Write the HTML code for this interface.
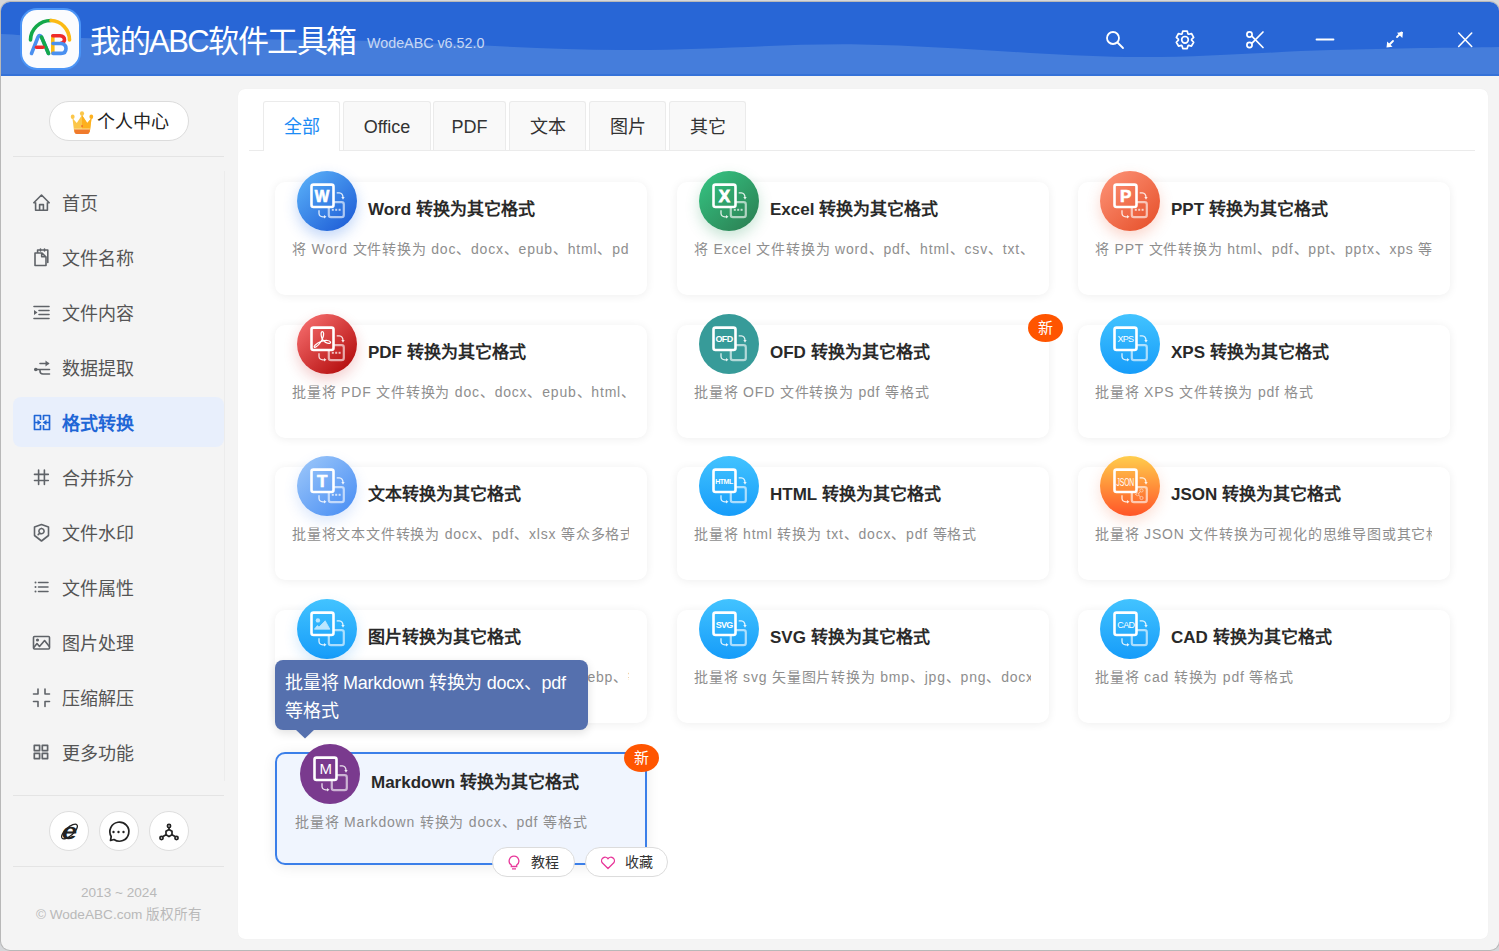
<!DOCTYPE html>
<html lang="zh-CN">
<head>
<meta charset="utf-8">
<style>
*{margin:0;padding:0;box-sizing:border-box}
html,body{width:1499px;height:951px;overflow:hidden;background:#d5d7da;font-family:"Liberation Sans",sans-serif}
.abs{position:absolute}
#win{position:absolute;left:1px;top:2px;width:1498px;height:948px;border-radius:9px;overflow:hidden;background:#f4f4f4;box-shadow:0 0 0 1px #b8b8b8}
#hdr{position:absolute;left:0;top:0;width:1498px;height:74px;background:#2866d6}
#hdr svg.wave{position:absolute;left:0;top:0}
.title{position:absolute;left:90px;top:22px;color:#fff;font-size:31px;line-height:40px;letter-spacing:-1.5px;white-space:nowrap}
.ver{position:absolute;left:367px;top:33px;color:#c8d8f4;font-size:14.3px;line-height:20px;white-space:nowrap}
.side-item{position:absolute;left:62px;margin-top:1.5px;font-size:18px;color:#555;line-height:24px;white-space:nowrap}
.side-ico{position:absolute;left:32px;width:18px;height:18px}
#panel{position:absolute;left:238px;top:89px;width:1250px;height:850px;background:#fff;border-radius:7px;box-shadow:0 0 1px rgba(0,0,0,.06)}
.tab{position:absolute;top:101px;height:50px;background:#f9f9f9;border:1px solid #ebebeb;border-bottom:none;border-radius:3px 3px 0 0;font-size:18px;color:#333;text-align:center;line-height:50px;white-space:nowrap}
.tab.act{background:#fff;color:#1c8cf5;height:50px}
.card{position:absolute;width:372px;height:113px;background:#fff;border-radius:10px;box-shadow:0 1px 10px rgba(0,0,0,.07)}
.card.hov{background:#f0f5fe;border:2px solid #3b7fe9;box-shadow:0 2px 14px rgba(0,0,0,.08)}
.cico{position:absolute;width:60px;height:60px;border-radius:50%}
.ctitle{position:absolute;font-size:17px;line-height:24px;margin-top:2px;font-weight:bold;color:#292929;white-space:nowrap}
.cdesc{position:absolute;width:337px;overflow:hidden;font-size:14px;line-height:22px;margin-top:0px;letter-spacing:0.8px;color:#8e8e8e;white-space:nowrap}
.badge{position:absolute;width:35px;height:28px;border-radius:50%;background:#ff5500;color:#fff;font-size:15px;line-height:28px;text-align:center}
.pbtn{position:absolute;width:83px;height:30px;border-radius:15px;background:#fff;border:1px solid #dcdcdc;font-size:14px;line-height:28px;color:#333;white-space:nowrap}
</style>
</head>
<body>
<div id="win">
  <div id="hdr">
    <svg class="wave" width="1498" height="74" viewBox="0 0 1498 74">
      <path d="M0 32 C33.3 33.6 41.7 35.4 100 36.5 C158.3 37.6 263.3 36.6 350 38.5 C436.7 40.4 535.0 47.3 620 48 C705.0 48.7 775.8 41.3 860 42.5 C944.2 43.7 1046.7 54.1 1125 55 C1203.3 55.9 1267.7 49.7 1330 48 C1392.3 46.3 1454.0 45.7 1499 45 L1500 74 L0 74 Z" fill="#457ddb"/>
      <rect x="0" y="72" width="1498" height="2" fill="#3572d8"/>
    </svg>
  </div>
</div>

<div class="abs" style="left:49px;top:101px;width:140px;height:40px;border-radius:20px;background:#fff;border:1px solid #dcdcdc"></div>
<svg class="abs" style="left:67.5px;top:110px" width="28" height="26" viewBox="0 0 28 26"><g transform="translate(14 0) scale(0.87 1) translate(-14 0)">
  <path d="M3 8 L8 13 L14 5 L20 13 L25 8 L23 22 L5 22 Z" fill="#fbc64a"/>
  <path d="M14 5 L20 13 L25 8 L23 22 L14 22 Z" fill="#fdb01e"/>
  <circle cx="3.3" cy="6.8" r="2.2" fill="#fbc64a"/><circle cx="14" cy="3.6" r="2.4" fill="#fbc64a"/><circle cx="24.7" cy="6.8" r="2.2" fill="#fdb01e"/>
  <path d="M5 19 H23 L22.5 22.5 Q22 24 20 24 H8 Q6 24 5.5 22.5 Z" fill="#f07a2c"/>
  <path d="M5 19 H23" stroke="#fde3a0" stroke-width="1"/>
  <path d="M13 15.5 L15 15.5 L14 17.5 Z" fill="#e53a2a"/>
</g></svg>
<div class="abs" style="left:97px;top:110px;font-size:18px;line-height:24px;color:#222;white-space:nowrap">个人中心</div>
<div class="abs" style="left:13px;top:156px;width:211px;height:1px;background:#e4e4e4"></div>
<div class="abs" style="left:224px;top:171px;width:1px;height:610px;background:#ececec"></div>
<div class="abs" style="left:13px;top:397px;width:211px;height:50px;border-radius:8px;background:#e8effc"></div>
<svg class="abs" style="left:0;top:180px" width="60" height="600" viewBox="0 180 60 600">
 <g fill="none" stroke="#5f6368" stroke-width="1.6" stroke-linejoin="round" stroke-linecap="round">
  <path d="M33.8 202.8 L41.5 195 L49.2 202.8 H47.4 V210.3 H35.6 V202.8 Z M39.6 210.3 V204.6 H43.4 V210.3"/>
  <path d="M35 253 H42 L46 257 V265.5 H35 Z M41.7 253 V256.8 H46 M37.6 253 V250 H47.8 V262.5 M40.5 249 V251 M44.5 249 V251"/>
  <path d="M34 306.5 H49 M39 310.5 H49 M39 314.5 H49 M34 318.5 H49"/>
  <path d="M35 369.5 H49.5 M40 369.5 V371 Q40 374 43 374 H49.5 M40 363.5 H48.5"/>
  <path d="M34.5 474.4 H48.3 M34.5 480.5 H48.3 M38.6 470 V484.5 M44.4 470 V484.5"/>
  <path d="M41.5 524.5 L48.5 527 V535.5 L41.5 541 L34.5 535.5 V527 Z M41.5 528.5 a2.6 2.6 0 1 1 -0.01 0 M39.8 533 L38.2 534.6"/>
  <path d="M38.5 582.5 H48 M38.5 587 H48 M38.5 591.5 H48" stroke-width="1.5"/>
  <rect x="33.5" y="636.5" width="16" height="12.5" rx="1"/>
  <path d="M33.8 647.5 L37 643.5 L39.5 646.5 L44.6 640.5 L49.3 646.5"/>
  <path d="M38 689 V694 H33.5 M45 689 V694 H49.5 M33.5 701.5 H38 V706.5 M49.5 701.5 H45 V706.5"/>
  <rect x="34.3" y="745.3" width="5.3" height="5.3" stroke-width="1.7"/><rect x="42.3" y="745.3" width="5.3" height="5.3" stroke-width="1.7"/>
  <rect x="34.3" y="753.3" width="5.3" height="5.3" stroke-width="1.7"/><rect x="42.3" y="753.3" width="5.3" height="5.3" stroke-width="1.7"/>
 </g>
 <g fill="#5f6368">
  <circle cx="35.8" cy="369.5" r="1.8"/><path d="M45.5 360.5 L49.3 363.5 L45.5 366.5 Z"/>
  <path d="M34 310 L37.5 312.5 L34 315 Z"/>
  <circle cx="35.5" cy="582.5" r="1"/><circle cx="35.5" cy="587" r="1"/><circle cx="35.5" cy="591.5" r="1"/>
  <circle cx="37.5" cy="640" r="1.6"/>
 </g>
 <g fill="none" stroke="#1f66d6" stroke-width="1.7" stroke-linejoin="round">
  <path d="M40.5 420 V415.5 H34.5 V429.5 H40.5 V425 M43.5 420 V415.5 H49.5 V429.5 H43.5 V425 M34.5 422.5 H38.5 M49.5 422.5 H45.5"/>
 </g>
 <g fill="#1f66d6"><path d="M37.5 419.7 L41.3 422.5 L37.5 425.3 Z M46.5 419.7 L42.7 422.5 L46.5 425.3 Z"/></g>
</svg>
<div class="side-item" style="top:190px">首页</div>
<div class="side-item" style="top:245px">文件名称</div>
<div class="side-item" style="top:300px">文件内容</div>
<div class="side-item" style="top:355px">数据提取</div>
<div class="side-item" style="top:410px;color:#1f66d6;font-weight:bold">格式转换</div>
<div class="side-item" style="top:465px">合并拆分</div>
<div class="side-item" style="top:520px">文件水印</div>
<div class="side-item" style="top:575px">文件属性</div>
<div class="side-item" style="top:630px">图片处理</div>
<div class="side-item" style="top:685px">压缩解压</div>
<div class="side-item" style="top:740px">更多功能</div>
<div class="abs" style="left:13px;top:795px;width:211px;height:1px;background:#e4e4e4"></div>
<div class="abs" style="left:49px;top:811px;width:40px;height:40px;border-radius:50%;background:#fff;border:1px solid #dedede"></div>
<div class="abs" style="left:99px;top:811px;width:40px;height:40px;border-radius:50%;background:#fff;border:1px solid #dedede"></div>
<div class="abs" style="left:149px;top:811px;width:40px;height:40px;border-radius:50%;background:#fff;border:1px solid #dedede"></div>
<svg class="abs" style="left:45px;top:805px" width="150" height="55" viewBox="45 805 150 55">
  <g transform="translate(69.5 832) skewX(-12) scale(1.2 1)"><text x="0" y="6.6" text-anchor="middle" font-family="Liberation Sans" font-weight="bold" font-size="23" fill="#222">e</text></g>
  <ellipse cx="69.5" cy="831.5" rx="10" ry="4" transform="rotate(-42 69.5 831.5)" fill="none" stroke="#222" stroke-width="1.2"/>
  <g fill="none" stroke="#222" stroke-width="1.7">
   <path d="M110.5 840.5 L111.2 836.5 A9.5 9.5 0 1 1 114 839.5 Z" stroke-linejoin="round"/>
   <circle cx="169" cy="826" r="1.6"/><circle cx="161.5" cy="838" r="1.6"/><circle cx="176.5" cy="838" r="1.6"/>
   <path d="M169 827.6 V829.5 M166 831.3 L169 829.5 L172 831.3 V834.7 L169 836.5 L166 834.7 Z M166 834.7 L163 836.5 M172 834.7 L175 836.5"/>
  </g>
  <g fill="#222"><circle cx="113.5" cy="832" r="1.2"/><circle cx="118.5" cy="832" r="1.2"/><circle cx="123.5" cy="832" r="1.2"/></g>
</svg>
<div class="abs" style="left:13px;top:866px;width:211px;height:1px;background:#e4e4e4"></div>
<div class="abs" style="left:0;top:884px;width:238px;text-align:center;font-size:13.6px;line-height:18px;color:#b9b9b9">2013 ~ 2024</div>
<div class="abs" style="left:0;top:906px;width:238px;text-align:center;font-size:13.6px;line-height:18px;color:#b9b9b9">© WodeABC.com 版权所有</div>
<div id="panel"></div>
<div class="tab act" style="left:263px;width:77px">全部</div>
<div class="tab" style="left:343px;width:88px">Office</div>
<div class="tab" style="left:433px;width:73px">PDF</div>
<div class="tab" style="left:509px;width:77px">文本</div>
<div class="tab" style="left:589px;width:77px">图片</div>
<div class="tab" style="left:669px;width:77px">其它</div>
<div class="abs" style="left:249px;top:150px;width:1226px;height:1px;background:#ebebeb"></div><div class="abs" style="left:264px;top:150px;width:75px;height:1px;background:#fff"></div>

<div class="abs" style="left:20px;top:8px;width:61px;height:62px;border-radius:17px;background:#4b94f6"></div>
<div class="abs" style="left:22px;top:10px;width:57px;height:58px;border-radius:15px;background:#fbfcfe"></div>
<svg class="abs" style="left:0;top:0" width="100" height="80" viewBox="0 0 100 80">
 <g fill="none" stroke-linecap="round" stroke-width="3.6">
  <path d="M30.5 40 A20.5 19.5 0 0 1 51 20.5" stroke="#13a84a"/>
  <path d="M51 20.5 A19 19.5 0 0 1 69.5 40" stroke="#fbba14"/>
  <path d="M31.5 53.5 L38 37 Q39.5 34 41.5 37 L48.5 53.5" stroke="#4a90f0"/>
  <path d="M41.5 37 L48.5 53.5" stroke="#13a84a"/>
  <path d="M36.5 47.3 L43 47.3" stroke="#ee2a2a"/>
  <path d="M52.8 36.5 L52.8 53" stroke="#fbba14"/>
  <path d="M52.8 35.8 L60 35.8 Q64.5 36 64.5 40 Q64 42.8 61 43.2" stroke="#ee2a2a"/>
  <path d="M53 43.5 L61 43.5 Q66 44 66 48.5 Q66 53.4 61 53.4 L53 53.4" stroke="#4a90f0"/>
 </g>
</svg>

<svg class="abs" style="left:1090px;top:20px" width="400" height="40" viewBox="1090 20 400 40">
 <g fill="none" stroke="#fff" stroke-width="1.8" stroke-linecap="round">
  <circle cx="1113" cy="38" r="6"/><path d="M1117.5 42.5 L1123 48"/>
  <path d="M1316.5 39.5 H1333.5"/>
  <path d="M1458.7 33 L1471.7 46.5 M1471.7 33 L1458.7 46.5" stroke-width="1.6"/>
  <path d="M1388.5 45.5 L1393 41 M1397 37 L1401.5 32.5"/>
 </g>
 <g fill="#fff">
  <path d="M1386.5 47.5 L1387.2 41.5 L1392.5 46.8 Z"/>
  <path d="M1403 32 L1402.3 38 L1397 32.7 Z"/>
 </g>
 <g fill="none" stroke="#fff" stroke-width="1.7">
  <path d="M1182.00 33.92 L1182.82 31.07 L1187.18 31.07 L1188.00 33.92 L1188.59 34.26 L1191.47 33.55 L1193.65 37.32 L1191.59 39.45 L1191.59 40.15 L1193.65 42.28 L1191.47 46.05 L1188.59 45.34 L1188.00 45.68 L1187.18 48.53 L1182.82 48.53 L1182.00 45.68 L1181.41 45.34 L1178.53 46.05 L1176.35 42.28 L1178.41 40.15 L1178.41 39.45 L1176.35 37.32 L1178.53 33.55 L1181.41 34.26 Z" stroke-linejoin="round"/>
  <circle cx="1185" cy="39.8" r="3.3"/>
  <circle cx="1249.5" cy="34.5" r="2.6"/><circle cx="1249.5" cy="45" r="2.6"/>
  <path d="M1251.8 36.2 L1263 47.5 M1251.8 43.3 L1263 32" stroke-linecap="round"/>
 </g>
</svg>
<!--CARDS-->
<div class="card" style="left:275px;top:182px"></div>
<div class="cico" style="left:297px;top:171px;box-shadow:0 6px 14px rgba(40,110,230,.28)"></div>
<svg class="abs" style="left:297px;top:171px" width="60" height="60" viewBox="0 0 60 60"><defs><linearGradient id="g_word" gradientUnits="userSpaceOnUse" x1="8" y1="6" x2="52" y2="54"><stop offset="0" stop-color="#55aaf6"/><stop offset="1" stop-color="#2161d8"/></linearGradient></defs><circle cx="30" cy="30" r="30" fill="url(#g_word)"/><g fill="none" stroke="#fff"><rect x="31.8" y="31.2" width="15" height="15" rx="2.2" stroke-width="2.2" opacity=".62"/><path d="M39.7 21.9 H42.3 Q45.8 22.2 46 26.5" stroke-width="1.3" opacity=".85"/><path d="M22 39.2 V42.5 Q22.3 45.7 25.8 45.8 H27.3" stroke-width="1.3" opacity=".85"/></g><g fill="#fff" opacity=".85"><path d="M44.3 26 L47.7 26 L46 28.8 Z"/><path d="M27 44.1 L29.5 45.8 L27 47.5 Z"/></g><g fill="#fff" opacity=".7"><rect x="34.8" y="37.8" width="2" height="2"/><rect x="38.2" y="37.8" width="2" height="2"/><rect x="41.6" y="37.8" width="2" height="2"/></g><rect x="14.5" y="13.6" width="22" height="22.4" rx="2" fill="url(#g_word)" stroke="#fff" stroke-width="2.6"/><text x="25" y="31.2" text-anchor="middle" font-family="Liberation Sans" fill="#fff" font-weight="bold" font-size="16.5" stroke="#fff" stroke-width=".7" transform="translate(25 0) scale(0.93 1) translate(-25 0)">W</text></svg>
<div class="ctitle" style="left:368px;top:196px">Word 转换为其它格式</div>
<div class="cdesc" style="left:292px;top:238px">将 Word 文件转换为 doc、docx、epub、html、pdf、jpg 等格式</div>
<div class="card" style="left:677px;top:182px"></div>
<div class="cico" style="left:699px;top:171px;box-shadow:0 6px 14px rgba(40,150,90,.25)"></div>
<svg class="abs" style="left:699px;top:171px" width="60" height="60" viewBox="0 0 60 60"><defs><linearGradient id="g_excel" gradientUnits="userSpaceOnUse" x1="8" y1="6" x2="52" y2="54"><stop offset="0" stop-color="#34be7e"/><stop offset="1" stop-color="#2c8456"/></linearGradient></defs><circle cx="30" cy="30" r="30" fill="url(#g_excel)"/><g fill="none" stroke="#fff"><rect x="31.8" y="31.2" width="15" height="15" rx="2.2" stroke-width="2.2" opacity=".62"/><path d="M39.7 21.9 H42.3 Q45.8 22.2 46 26.5" stroke-width="1.3" opacity=".85"/><path d="M22 39.2 V42.5 Q22.3 45.7 25.8 45.8 H27.3" stroke-width="1.3" opacity=".85"/></g><g fill="#fff" opacity=".85"><path d="M44.3 26 L47.7 26 L46 28.8 Z"/><path d="M27 44.1 L29.5 45.8 L27 47.5 Z"/></g><g fill="#fff" opacity=".7"><rect x="34.8" y="37.8" width="2" height="2"/><rect x="38.2" y="37.8" width="2" height="2"/><rect x="41.6" y="37.8" width="2" height="2"/></g><rect x="14.5" y="13.6" width="22" height="22.4" rx="2" fill="url(#g_excel)" stroke="#fff" stroke-width="2.6"/><text x="25.3" y="31.2" text-anchor="middle" font-family="Liberation Sans" fill="#fff" font-weight="bold" font-size="17" stroke="#fff" stroke-width=".8">X</text></svg>
<div class="ctitle" style="left:770px;top:196px">Excel 转换为其它格式</div>
<div class="cdesc" style="left:694px;top:238px">将 Excel 文件转换为 word、pdf、html、csv、txt、jpg 等格式</div>
<div class="card" style="left:1078px;top:182px"></div>
<div class="cico" style="left:1100px;top:171px;box-shadow:0 6px 14px rgba(240,100,60,.25)"></div>
<svg class="abs" style="left:1100px;top:171px" width="60" height="60" viewBox="0 0 60 60"><defs><linearGradient id="g_ppt" gradientUnits="userSpaceOnUse" x1="8" y1="6" x2="52" y2="54"><stop offset="0" stop-color="#fb8d70"/><stop offset="1" stop-color="#e85530"/></linearGradient></defs><circle cx="30" cy="30" r="30" fill="url(#g_ppt)"/><g fill="none" stroke="#fff"><rect x="31.8" y="31.2" width="15" height="15" rx="2.2" stroke-width="2.2" opacity=".62"/><path d="M39.7 21.9 H42.3 Q45.8 22.2 46 26.5" stroke-width="1.3" opacity=".85"/><path d="M22 39.2 V42.5 Q22.3 45.7 25.8 45.8 H27.3" stroke-width="1.3" opacity=".85"/></g><g fill="#fff" opacity=".85"><path d="M44.3 26 L47.7 26 L46 28.8 Z"/><path d="M27 44.1 L29.5 45.8 L27 47.5 Z"/></g><g fill="#fff" opacity=".7"><rect x="34.8" y="37.8" width="2" height="2"/><rect x="38.2" y="37.8" width="2" height="2"/><rect x="41.6" y="37.8" width="2" height="2"/></g><rect x="14.5" y="13.6" width="22" height="22.4" rx="2" fill="url(#g_ppt)" stroke="#fff" stroke-width="2.6"/><text x="25.6" y="31.2" text-anchor="middle" font-family="Liberation Sans" fill="#fff" font-weight="bold" font-size="17" stroke="#fff" stroke-width=".6">P</text></svg>
<div class="ctitle" style="left:1171px;top:196px">PPT 转换为其它格式</div>
<div class="cdesc" style="left:1095px;top:238px">将 PPT 文件转换为 html、pdf、ppt、pptx、xps 等格式</div>
<div class="card" style="left:275px;top:325px"></div>
<div class="cico" style="left:297px;top:314px;box-shadow:0 6px 14px rgba(200,30,30,.22)"></div>
<svg class="abs" style="left:297px;top:314px" width="60" height="60" viewBox="0 0 60 60"><defs><linearGradient id="g_pdf" gradientUnits="userSpaceOnUse" x1="8" y1="6" x2="52" y2="54"><stop offset="0" stop-color="#f26868"/><stop offset="1" stop-color="#b50f0f"/></linearGradient></defs><circle cx="30" cy="30" r="30" fill="url(#g_pdf)"/><g fill="none" stroke="#fff"><rect x="31.8" y="31.2" width="15" height="15" rx="2.2" stroke-width="2.2" opacity=".62"/><path d="M39.7 21.9 H42.3 Q45.8 22.2 46 26.5" stroke-width="1.3" opacity=".85"/><path d="M22 39.2 V42.5 Q22.3 45.7 25.8 45.8 H27.3" stroke-width="1.3" opacity=".85"/></g><g fill="#fff" opacity=".85"><path d="M44.3 26 L47.7 26 L46 28.8 Z"/><path d="M27 44.1 L29.5 45.8 L27 47.5 Z"/></g><g fill="#fff" opacity=".7"><rect x="34.8" y="37.8" width="2" height="2"/><rect x="38.2" y="37.8" width="2" height="2"/><rect x="41.6" y="37.8" width="2" height="2"/></g><rect x="14.5" y="13.6" width="22" height="22.4" rx="2" fill="url(#g_pdf)" stroke="#fff" stroke-width="2.6"/><path d="M25.4 17.6 C23.6 17.6 23.9 21.8 25 24.6 C26.3 28 30.6 29.8 32.7 29.3 C34.3 28.9 33.6 26.6 30.2 26.5 C26.2 26.4 20.8 28.9 18 31.3 C16.4 32.8 17.4 34 19.2 32.8 C21.5 31.2 24.6 27 25.9 23.6 C26.9 20.9 27 17.6 25.4 17.6 Z" fill="none" stroke="#fff" stroke-width="1.25" stroke-linejoin="round"/></svg>
<div class="ctitle" style="left:368px;top:339px">PDF 转换为其它格式</div>
<div class="cdesc" style="left:292px;top:381px">批量将 PDF 文件转换为 doc、docx、epub、html、jpg 等格式</div>
<div class="card" style="left:677px;top:325px"></div>
<div class="cico" style="left:699px;top:314px;box-shadow:0 6px 14px rgba(0,0,0,0)"></div>
<svg class="abs" style="left:699px;top:314px" width="60" height="60" viewBox="0 0 60 60"><defs><linearGradient id="g_ofd" gradientUnits="userSpaceOnUse" x1="30" y1="0" x2="30" y2="60"><stop offset="0" stop-color="#379b99"/><stop offset="1" stop-color="#379b99"/></linearGradient></defs><circle cx="30" cy="30" r="30" fill="url(#g_ofd)"/><g fill="none" stroke="#fff"><rect x="31.8" y="31.2" width="15" height="15" rx="2.2" stroke-width="2.2" opacity=".62"/><path d="M39.7 21.9 H42.3 Q45.8 22.2 46 26.5" stroke-width="1.3" opacity=".85"/><path d="M22 39.2 V42.5 Q22.3 45.7 25.8 45.8 H27.3" stroke-width="1.3" opacity=".85"/></g><g fill="#fff" opacity=".85"><path d="M44.3 26 L47.7 26 L46 28.8 Z"/><path d="M27 44.1 L29.5 45.8 L27 47.5 Z"/></g><rect x="14.5" y="13.6" width="22" height="22.4" rx="2" fill="url(#g_ofd)" stroke="#fff" stroke-width="2.6"/><text x="25" y="28.3" text-anchor="middle" font-family="Liberation Sans" fill="#fff" font-weight="bold" font-size="9" letter-spacing="-0.7">OFD</text></svg>
<div class="ctitle" style="left:770px;top:339px">OFD 转换为其它格式</div>
<div class="cdesc" style="left:694px;top:381px">批量将 OFD 文件转换为 pdf 等格式</div>
<div class="card" style="left:1078px;top:325px"></div>
<div class="cico" style="left:1100px;top:314px;box-shadow:0 6px 14px rgba(0,0,0,0)"></div>
<svg class="abs" style="left:1100px;top:314px" width="60" height="60" viewBox="0 0 60 60"><defs><linearGradient id="g_xps" gradientUnits="userSpaceOnUse" x1="30" y1="0" x2="30" y2="60"><stop offset="0" stop-color="#42c3ff"/><stop offset="1" stop-color="#169cf9"/></linearGradient></defs><circle cx="30" cy="30" r="30" fill="url(#g_xps)"/><g fill="none" stroke="#fff"><rect x="31.8" y="31.2" width="15" height="15" rx="2.2" stroke-width="2.2" opacity=".62"/><path d="M39.7 21.9 H42.3 Q45.8 22.2 46 26.5" stroke-width="1.3" opacity=".85"/><path d="M22 39.2 V42.5 Q22.3 45.7 25.8 45.8 H27.3" stroke-width="1.3" opacity=".85"/></g><g fill="#fff" opacity=".85"><path d="M44.3 26 L47.7 26 L46 28.8 Z"/><path d="M27 44.1 L29.5 45.8 L27 47.5 Z"/></g><rect x="14.5" y="13.6" width="22" height="22.4" rx="2" fill="url(#g_xps)" stroke="#fff" stroke-width="2.6"/><text x="25.3" y="28.3" text-anchor="middle" font-family="Liberation Sans" fill="#fff" font-size="9" letter-spacing="-0.8">XPS</text></svg>
<div class="ctitle" style="left:1171px;top:339px">XPS 转换为其它格式</div>
<div class="cdesc" style="left:1095px;top:381px">批量将 XPS 文件转换为 pdf 格式</div>
<div class="card" style="left:275px;top:467px"></div>
<div class="cico" style="left:297px;top:456px;box-shadow:0 6px 14px rgba(80,140,240,.2)"></div>
<svg class="abs" style="left:297px;top:456px" width="60" height="60" viewBox="0 0 60 60"><defs><linearGradient id="g_txt" gradientUnits="userSpaceOnUse" x1="8" y1="6" x2="52" y2="54"><stop offset="0" stop-color="#95c2f9"/><stop offset="1" stop-color="#4f92f4"/></linearGradient></defs><circle cx="30" cy="30" r="30" fill="url(#g_txt)"/><g fill="none" stroke="#fff"><rect x="31.8" y="31.2" width="15" height="15" rx="2.2" stroke-width="2.2" opacity=".62"/><path d="M39.7 21.9 H42.3 Q45.8 22.2 46 26.5" stroke-width="1.3" opacity=".85"/><path d="M22 39.2 V42.5 Q22.3 45.7 25.8 45.8 H27.3" stroke-width="1.3" opacity=".85"/></g><g fill="#fff" opacity=".85"><path d="M44.3 26 L47.7 26 L46 28.8 Z"/><path d="M27 44.1 L29.5 45.8 L27 47.5 Z"/></g><g fill="#fff" opacity=".7"><rect x="34.8" y="37.8" width="2" height="2"/><rect x="38.2" y="37.8" width="2" height="2"/><rect x="41.6" y="37.8" width="2" height="2"/></g><rect x="14.5" y="13.6" width="22" height="22.4" rx="2" fill="url(#g_txt)" stroke="#fff" stroke-width="2.6"/><text x="25.2" y="31.2" text-anchor="middle" font-family="Liberation Sans" fill="#fff" font-weight="bold" font-size="17" stroke="#fff" stroke-width=".6">T</text></svg>
<div class="ctitle" style="left:368px;top:481px">文本转换为其它格式</div>
<div class="cdesc" style="left:292px;top:523px">批量将文本文件转换为 docx、pdf、xlsx 等众多格式</div>
<div class="card" style="left:677px;top:467px"></div>
<div class="cico" style="left:699px;top:456px;box-shadow:0 6px 14px rgba(0,0,0,0)"></div>
<svg class="abs" style="left:699px;top:456px" width="60" height="60" viewBox="0 0 60 60"><defs><linearGradient id="g_html" gradientUnits="userSpaceOnUse" x1="30" y1="0" x2="30" y2="60"><stop offset="0" stop-color="#42c3ff"/><stop offset="1" stop-color="#169cf9"/></linearGradient></defs><circle cx="30" cy="30" r="30" fill="url(#g_html)"/><g fill="none" stroke="#fff"><rect x="31.8" y="31.2" width="15" height="15" rx="2.2" stroke-width="2.2" opacity=".62"/><path d="M39.7 21.9 H42.3 Q45.8 22.2 46 26.5" stroke-width="1.3" opacity=".85"/><path d="M22 39.2 V42.5 Q22.3 45.7 25.8 45.8 H27.3" stroke-width="1.3" opacity=".85"/></g><g fill="#fff" opacity=".85"><path d="M44.3 26 L47.7 26 L46 28.8 Z"/><path d="M27 44.1 L29.5 45.8 L27 47.5 Z"/></g><rect x="14.5" y="13.6" width="22" height="22.4" rx="2" fill="url(#g_html)" stroke="#fff" stroke-width="2.6"/><text x="25" y="27.6" text-anchor="middle" font-family="Liberation Sans" fill="#fff" font-weight="bold" font-size="7" letter-spacing="-0.5">HTML</text></svg>
<div class="ctitle" style="left:770px;top:481px">HTML 转换为其它格式</div>
<div class="cdesc" style="left:694px;top:523px">批量将 html 转换为 txt、docx、pdf 等格式</div>
<div class="card" style="left:1078px;top:467px"></div>
<div class="cico" style="left:1100px;top:456px;box-shadow:0 6px 14px rgba(240,100,50,.2)"></div>
<svg class="abs" style="left:1100px;top:456px" width="60" height="60" viewBox="0 0 60 60"><defs><linearGradient id="g_json" gradientUnits="userSpaceOnUse" x1="30" y1="0" x2="30" y2="60"><stop offset="0" stop-color="#ffcd4c"/><stop offset="1" stop-color="#ff5528"/></linearGradient></defs><circle cx="30" cy="30" r="30" fill="url(#g_json)"/><g fill="none" stroke="#fff"><rect x="31.8" y="31.2" width="15" height="15" rx="2.2" stroke-width="2.2" opacity=".62"/><path d="M39.7 21.9 H42.3 Q45.8 22.2 46 26.5" stroke-width="1.3" opacity=".85"/><path d="M22 39.2 V42.5 Q22.3 45.7 25.8 45.8 H27.3" stroke-width="1.3" opacity=".85"/></g><g fill="#fff" opacity=".85"><path d="M44.3 26 L47.7 26 L46 28.8 Z"/><path d="M27 44.1 L29.5 45.8 L27 47.5 Z"/></g><g fill="none" stroke="#fff" stroke-width=".9" opacity=".6"><circle cx="41.5" cy="34.5" r="1.6"/><circle cx="41.5" cy="42" r="1.6"/><circle cx="37.5" cy="38.3" r="1.4"/><path d="M35 38.3 H36 M38.8 37.6 L40.2 35.5 M38.8 39 L40.2 41"/></g><rect x="14.5" y="13.6" width="22" height="22.4" rx="2" fill="url(#g_json)" stroke="#fff" stroke-width="2.6"/><text x="25.3" y="29.6" text-anchor="middle" font-family="Liberation Sans" fill="#fff" font-size="11" letter-spacing="-0.3" transform="translate(25.3 0) scale(0.62 1) translate(-25.3 0)">JSON</text></svg>
<div class="ctitle" style="left:1171px;top:481px">JSON 转换为其它格式</div>
<div class="cdesc" style="left:1095px;top:523px">批量将 JSON 文件转换为可视化的思维导图或其它格式</div>
<div class="card" style="left:275px;top:610px"></div>
<div class="cico" style="left:297px;top:599px;box-shadow:0 6px 14px rgba(40,150,240,.2)"></div>
<svg class="abs" style="left:297px;top:599px" width="60" height="60" viewBox="0 0 60 60"><defs><linearGradient id="g_img" gradientUnits="userSpaceOnUse" x1="30" y1="0" x2="30" y2="60"><stop offset="0" stop-color="#42c3ff"/><stop offset="1" stop-color="#169cf9"/></linearGradient></defs><circle cx="30" cy="30" r="30" fill="url(#g_img)"/><g fill="none" stroke="#fff"><rect x="31.8" y="31.2" width="15" height="15" rx="2.2" stroke-width="2.2" opacity=".62"/><path d="M39.7 21.9 H42.3 Q45.8 22.2 46 26.5" stroke-width="1.3" opacity=".85"/><path d="M22 39.2 V42.5 Q22.3 45.7 25.8 45.8 H27.3" stroke-width="1.3" opacity=".85"/></g><g fill="#fff" opacity=".85"><path d="M44.3 26 L47.7 26 L46 28.8 Z"/><path d="M27 44.1 L29.5 45.8 L27 47.5 Z"/></g><rect x="14.5" y="13.6" width="22" height="22.4" rx="2" fill="url(#g_img)" stroke="#fff" stroke-width="2.6"/><g fill="#fff" opacity=".68"><circle cx="20.9" cy="21.4" r="2.2"/><path d="M17.4 30.2 L20.3 26.6 L22 28 L28.2 21.8 L32.9 30.2 Z" stroke="#fff" stroke-width=".8" stroke-linejoin="round"/></g></svg>
<div class="ctitle" style="left:368px;top:624px">图片转换为其它格式</div>
<div class="cdesc" style="left:292px;top:666px">批量将图片转换为 jpeg、png、gif、bmp、webp、等众多格式</div>
<div class="card" style="left:677px;top:610px"></div>
<div class="cico" style="left:699px;top:599px;box-shadow:0 6px 14px rgba(0,0,0,0)"></div>
<svg class="abs" style="left:699px;top:599px" width="60" height="60" viewBox="0 0 60 60"><defs><linearGradient id="g_svg" gradientUnits="userSpaceOnUse" x1="30" y1="0" x2="30" y2="60"><stop offset="0" stop-color="#42c3ff"/><stop offset="1" stop-color="#169cf9"/></linearGradient></defs><circle cx="30" cy="30" r="30" fill="url(#g_svg)"/><g fill="none" stroke="#fff"><rect x="31.8" y="31.2" width="15" height="15" rx="2.2" stroke-width="2.2" opacity=".62"/><path d="M39.7 21.9 H42.3 Q45.8 22.2 46 26.5" stroke-width="1.3" opacity=".85"/><path d="M22 39.2 V42.5 Q22.3 45.7 25.8 45.8 H27.3" stroke-width="1.3" opacity=".85"/></g><g fill="#fff" opacity=".85"><path d="M44.3 26 L47.7 26 L46 28.8 Z"/><path d="M27 44.1 L29.5 45.8 L27 47.5 Z"/></g><rect x="14.5" y="13.6" width="22" height="22.4" rx="2" fill="url(#g_svg)" stroke="#fff" stroke-width="2.6"/><text x="25.2" y="28.6" text-anchor="middle" font-family="Liberation Sans" fill="#fff" font-weight="bold" font-size="9" letter-spacing="-0.7">SVG</text></svg>
<div class="ctitle" style="left:770px;top:624px">SVG 转换为其它格式</div>
<div class="cdesc" style="left:694px;top:666px">批量将 svg 矢量图片转换为 bmp、jpg、png、docx 等格式</div>
<div class="card" style="left:1078px;top:610px"></div>
<div class="cico" style="left:1100px;top:599px;box-shadow:0 6px 14px rgba(0,0,0,0)"></div>
<svg class="abs" style="left:1100px;top:599px" width="60" height="60" viewBox="0 0 60 60"><defs><linearGradient id="g_cad" gradientUnits="userSpaceOnUse" x1="30" y1="0" x2="30" y2="60"><stop offset="0" stop-color="#42c3ff"/><stop offset="1" stop-color="#169cf9"/></linearGradient></defs><circle cx="30" cy="30" r="30" fill="url(#g_cad)"/><g fill="none" stroke="#fff"><rect x="31.8" y="31.2" width="15" height="15" rx="2.2" stroke-width="2.2" opacity=".62"/><path d="M39.7 21.9 H42.3 Q45.8 22.2 46 26.5" stroke-width="1.3" opacity=".85"/><path d="M22 39.2 V42.5 Q22.3 45.7 25.8 45.8 H27.3" stroke-width="1.3" opacity=".85"/></g><g fill="#fff" opacity=".85"><path d="M44.3 26 L47.7 26 L46 28.8 Z"/><path d="M27 44.1 L29.5 45.8 L27 47.5 Z"/></g><rect x="14.5" y="13.6" width="22" height="22.4" rx="2" fill="url(#g_cad)" stroke="#fff" stroke-width="2.6"/><text x="25.8" y="28.8" text-anchor="middle" font-family="Liberation Sans" fill="#fff" font-size="9" letter-spacing="-0.7">CAD</text></svg>
<div class="ctitle" style="left:1171px;top:624px">CAD 转换为其它格式</div>
<div class="cdesc" style="left:1095px;top:666px">批量将 cad 转换为 pdf 等格式</div>
<div class="card hov" style="left:275px;top:752px"></div>
<div class="cico" style="left:300px;top:773.7px;box-shadow:0 6px 14px rgba(0,0,0,0)"></div>
<svg class="abs" style="left:300px;top:743.7px" width="60" height="60" viewBox="0 0 60 60"><defs><linearGradient id="g_md" gradientUnits="userSpaceOnUse" x1="30" y1="0" x2="30" y2="60"><stop offset="0" stop-color="#7a3a8e"/><stop offset="1" stop-color="#7a3a8e"/></linearGradient></defs><circle cx="30" cy="30" r="30" fill="url(#g_md)"/><g fill="none" stroke="#fff"><rect x="31.8" y="31.2" width="15" height="15" rx="2.2" stroke-width="2.2" opacity=".62"/><path d="M39.7 21.9 H42.3 Q45.8 22.2 46 26.5" stroke-width="1.3" opacity=".85"/><path d="M22 39.2 V42.5 Q22.3 45.7 25.8 45.8 H27.3" stroke-width="1.3" opacity=".85"/></g><g fill="#fff" opacity=".85"><path d="M44.3 26 L47.7 26 L46 28.8 Z"/><path d="M27 44.1 L29.5 45.8 L27 47.5 Z"/></g><rect x="14.5" y="13.6" width="22" height="22.4" rx="2" fill="url(#g_md)" stroke="#fff" stroke-width="2.6"/><text x="25.8" y="30.3" text-anchor="middle" font-family="Liberation Sans" fill="#fff" font-size="15">M</text></svg>
<div class="ctitle" style="left:371px;top:769px">Markdown 转换为其它格式</div>
<div class="cdesc" style="left:295px;top:811px">批量将 Markdown 转换为 docx、pdf 等格式</div>
<!--/CARDS-->

<div class="badge" style="left:1028px;top:314px">新</div>
<div class="badge" style="left:624px;top:744px">新</div>
<div class="abs" style="left:275px;top:660px;width:313px;height:70px;border-radius:8px;background:#5570ae;box-shadow:0 3px 10px rgba(0,0,0,.12)"></div>
<svg class="abs" style="left:290px;top:729px" width="30" height="12" viewBox="0 0 30 12"><path d="M5 0 L15 9.5 L25 0 Z" fill="#5570ae"/></svg>
<div class="abs" style="left:285px;top:669px;font-size:18px;line-height:28px;letter-spacing:-0.25px;color:#fff;white-space:nowrap">批量将 Markdown 转换为 docx、pdf<br>等格式</div>
<div class="pbtn" style="left:492px;top:847px"><svg class="abs" style="left:14px;top:7px" width="14" height="16" viewBox="0 0 14 16"><path d="M7 1.2 A4.8 4.8 0 0 0 4.3 10 V11.5 H9.7 V10 A4.8 4.8 0 0 0 7 1.2 Z M5 13.8 H9" fill="none" stroke="#e8379a" stroke-width="1.3"/></svg><span class="abs" style="left:38px;top:0">教程</span></div>
<div class="pbtn" style="left:585px;top:847px"><svg class="abs" style="left:14px;top:8px" width="16" height="14" viewBox="0 0 16 14"><path d="M8 12.5 L2.2 6.8 A3.3 3.3 0 0 1 8 2.8 A3.3 3.3 0 0 1 13.8 6.8 Z" fill="none" stroke="#e8379a" stroke-width="1.3" stroke-linejoin="round"/></svg><span class="abs" style="left:39px;top:0">收藏</span></div>
<div class="title">我的ABC软件工具箱</div>
<div class="ver">WodeABC v6.52.0</div>
</body>
</html>
